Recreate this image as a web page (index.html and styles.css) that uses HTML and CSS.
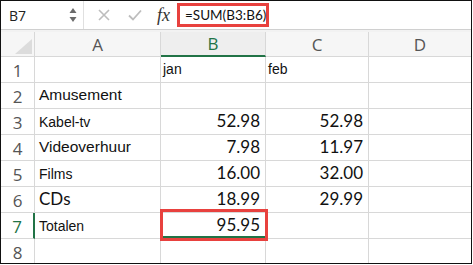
FILE: index.html
```html
<!DOCTYPE html>
<html lang="nl">
<head>
    <meta charset="UTF-8">
    <meta name="viewport" content="width=device-width, initial-scale=1.0">
    <title>Totalen</title>
    <link rel="stylesheet" href="styles.css">
</head>
<body>
    <div class="sheet-window">
        <div class="formula-bar">
            <div class="name-box">
                <span>B7</span>
                <svg class="spin" width="8" height="16" viewBox="0 0 8 16">
                    <path d="M4 1 L7.5 6 L0.5 6 Z" fill="#6b6b6b"/>
                    <path d="M4 15 L7.5 10 L0.5 10 Z" fill="#6b6b6b"/>
                </svg>
            </div>
            <div class="bar-buttons">
                <svg class="cancel" width="12" height="12" viewBox="0 0 12 12">
                    <path d="M1 1 L11 11 M11 1 L1 11" stroke="#bdbdbd" stroke-width="1.6" fill="none"/>
                </svg>
                <svg class="enter" width="14" height="12" viewBox="0 0 14 12">
                    <path d="M1 6.5 L5 10.5 L13 1.5" stroke="#bdbdbd" stroke-width="1.8" fill="none"/>
                </svg>
                <span class="fx">fx</span>
            </div>
            <div class="formula-input">=SUM(B3:B6)</div>
        </div>
        <div class="band"></div>
        <div class="grid">
            <div class="corner"><span class="corner-mark"></span></div>
            <div class="col-head">A</div>
            <div class="col-head active">B</div>
            <div class="col-head">C</div>
            <div class="col-head last">D</div>

            <div class="row-head">1</div>
            <div class="cell"></div>
            <div class="cell small">jan</div>
            <div class="cell small">feb</div>
            <div class="cell last"></div>

            <div class="row-head">2</div>
            <div class="cell label-big">Amusement</div>
            <div class="cell"></div>
            <div class="cell"></div>
            <div class="cell last"></div>

            <div class="row-head">3</div>
            <div class="cell label">Kabel-tv</div>
            <div class="cell num">52.98</div>
            <div class="cell num">52.98</div>
            <div class="cell last"></div>

            <div class="row-head">4</div>
            <div class="cell label-big">Videoverhuur</div>
            <div class="cell num">7.98</div>
            <div class="cell num">11.97</div>
            <div class="cell last"></div>

            <div class="row-head">5</div>
            <div class="cell label">Films</div>
            <div class="cell num">16.00</div>
            <div class="cell num">32.00</div>
            <div class="cell last"></div>

            <div class="row-head">6</div>
            <div class="cell label-num">CDs</div>
            <div class="cell num">18.99</div>
            <div class="cell num">29.99</div>
            <div class="cell last"></div>

            <div class="row-head active">7</div>
            <div class="cell label">Totalen</div>
            <div class="cell num selected">95.95<span class="highlight"></span></div>
            <div class="cell"></div>
            <div class="cell last"></div>

            <div class="row-head bottom">8</div>
            <div class="cell bottom"></div>
            <div class="cell bottom"></div>
            <div class="cell bottom"></div>
            <div class="cell bottom last"></div>
        </div>
    </div>
</body>
</html>
```

FILE: styles.css
```css
body {
    margin: 0;
    background-color: #ffffff;
    font-family: "Liberation Sans", Arial, sans-serif;
}
.sheet-window {
    width: 472px;
    height: 264px;
    box-sizing: border-box;
    border: 1px solid #111111;
    overflow: hidden;
}
.formula-bar {
    height: 29px;
    box-sizing: border-box;
    border-bottom: 1px solid #d0d0d0;
    display: flex;
    align-items: center;
}
.name-box {
    width: 83px;
    height: 100%;
    box-sizing: border-box;
    border-right: 1px solid #e0e0e0;
    display: flex;
    align-items: center;
    justify-content: space-between;
    padding: 0 6px 0 8px;
    font-family: "Open Sans", sans-serif;
    font-size: 14px;
    color: #222222;
}
.bar-buttons {
    width: 93px;
    display: flex;
    align-items: center;
    padding-left: 14px;
    box-sizing: border-box;
}
.cancel {
    margin-right: 18px;
}
.enter {
    margin-right: 15px;
}
.fx {
    font-family: "Liberation Serif", serif;
    font-style: italic;
    font-size: 18px;
    color: #333333;
}
.formula-input {
    width: 92px;
    height: 24px;
    box-sizing: border-box;
    border: 3px solid #e8413e;
    display: flex;
    align-items: center;
    padding-left: 5px;
    font-family: Lato, sans-serif;
    font-size: 13.5px;
    color: #111111;
}
.band {
    height: 2px;
    background-color: #f2f2f2;
}
.grid {
    display: grid;
    grid-template-columns: 34px 126px 105px 103px 102px;
    grid-template-rows: 25px repeat(7, 26px) 24px;
}
.grid > div {
    box-sizing: border-box;
    border-right: 1px solid #d8d8d8;
    border-bottom: 1px solid #d8d8d8;
}
.grid > .last {
    border-right: none;
}
.grid > .bottom {
    border-bottom: none;
}
.corner {
    background-color: #f6f6f6;
    position: relative;
}
.corner-mark {
    position: absolute;
    right: 2px;
    bottom: 2px;
    width: 0;
    height: 0;
    border-left: 17px solid transparent;
    border-bottom: 15px solid #dcdcdc;
}
.col-head {
    background-color: #f6f6f6;
    display: flex;
    align-items: center;
    justify-content: center;
    font-family: "Open Sans", sans-serif;
    font-size: 17px;
    color: #555555;
}
.col-head.active {
    color: #217346;
    background-color: #eeeeee;
    border-bottom: 2px solid #217346;
}
.row-head {
    display: flex;
    align-items: center;
    justify-content: center;
    font-family: "Open Sans", sans-serif;
    font-size: 17px;
    color: #555555;
    padding-top: 2px;
}
.row-head.active {
    color: #217346;
    border-right: 2px solid #217346;
}
.cell {
    display: flex;
    align-items: flex-end;
    padding: 0 4px 4px 4px;
    color: #111111;
    white-space: nowrap;
}
.label {
    font-size: 14px;
}
.label-big {
    font-size: 15.5px;
}
.small {
    font-size: 14px;
    padding-bottom: 5px;
    padding-left: 2px;
}
.label-num {
    font-family: Lato, sans-serif;
    font-size: 17px;
    padding-bottom: 3px;
}
.num {
    justify-content: flex-end;
    font-family: Lato, sans-serif;
    font-size: 17px;
    padding-right: 5px;
    padding-bottom: 3px;
}
.selected {
    position: relative;
    box-shadow: inset 0 -2px 0 #217346;
}
.highlight {
    position: absolute;
    left: -1px;
    top: -4px;
    right: -3px;
    bottom: -3px;
    border: 3px solid #e8413e;
}
```
